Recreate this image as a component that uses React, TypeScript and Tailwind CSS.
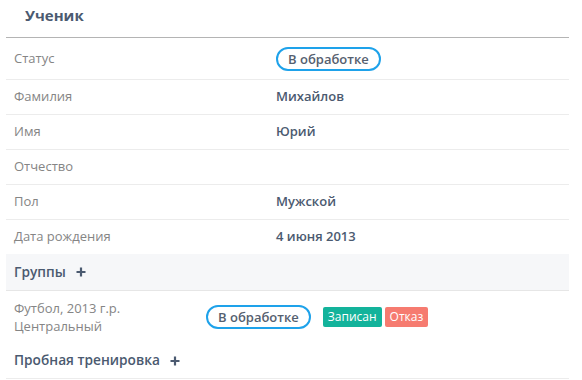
import React from "react";

const font = { fontFamily: '"Open Sans", "Noto Sans", sans-serif' };

function Pill() {
  return (
    <span className="inline-flex h-[24px] items-center rounded-full border-2 border-[#1ea2ea] px-[10px] text-[13px] font-semibold leading-none text-[#55606f]">
      В обработке
    </span>
  );
}

function Row({ label, children }: { label: string; children?: React.ReactNode }) {
  return (
    <div className="flex h-[35px] items-center border-b border-[#ececec]">
      <div className="w-[270px] pl-[8px] text-[13px] text-[#858585]">{label}</div>
      <div className="flex-1 text-[13px] font-semibold text-[#4b5a70]">{children}</div>
    </div>
  );
}

function Plus() {
  return (
    <svg width="10" height="10" viewBox="0 0 10 10" className="ml-[10px]">
      <path d="M5 0.5v9M0.5 5h9" stroke="#4b5a70" strokeWidth="2.2" />
    </svg>
  );
}

export default function App() {
  return (
    <div className="h-[380px] w-[582px] bg-white" style={font}>
      <div className="px-[6px] pr-[13px]">
        <div className="h-[38px] border-b border-[#b4b4b4] pl-[19px] pt-[3px]">
          <span className="text-[15px] font-bold leading-[20px] text-[#4b5a70]">Ученик</span>
        </div>
        <div className="flex h-[42px] items-center border-b border-[#ececec]">
          <div className="w-[270px] pl-[8px] text-[13px] text-[#858585]">Статус</div>
          <div className="flex-1">
            <Pill />
          </div>
        </div>
        <Row label="Фамилия">Михайлов</Row>
        <Row label="Имя">Юрий</Row>
        <Row label="Отчество" />
        <Row label="Пол">Мужской</Row>
        <div className="flex h-[34px] items-center">
          <div className="w-[270px] pl-[8px] text-[13px] text-[#858585]">Дата рождения</div>
          <div className="flex-1 text-[13px] font-semibold text-[#4b5a70]">4 июня 2013</div>
        </div>
        <div className="flex h-[37px] items-center border-b border-[#e6e6e6] bg-[#f6f7f9] pl-[8px]">
          <span className="text-[13.7px] font-semibold text-[#4b5a70]">Группы</span>
          <Plus />
        </div>
        <div className="flex h-[52px] items-center">
          <div className="w-[200px] pl-[8px] text-[13px] leading-[18px] text-[#858585]">
            <div>Футбол, 2013 г.р.</div>
            <div>Центральный</div>
          </div>
          <div className="flex items-center">
            <Pill />
            <span className="ml-[12px] inline-flex h-[20px] items-center rounded-[2px] bg-[#13b39b] px-[5px] text-[12px] leading-none text-white">
              Записан
            </span>
            <span className="ml-[3px] inline-flex h-[20px] items-center rounded-[2px] bg-[#f67b70] px-[5px] text-[12px] leading-none text-white">
              Отказ
            </span>
          </div>
        </div>
        <div className="flex h-[36px] items-center border-b border-[#ececec] pl-[8px]">
          <span className="text-[13.7px] font-semibold text-[#4b5a70]">Пробная тренировка</span>
          <Plus />
        </div>
      </div>
    </div>
  );
}
